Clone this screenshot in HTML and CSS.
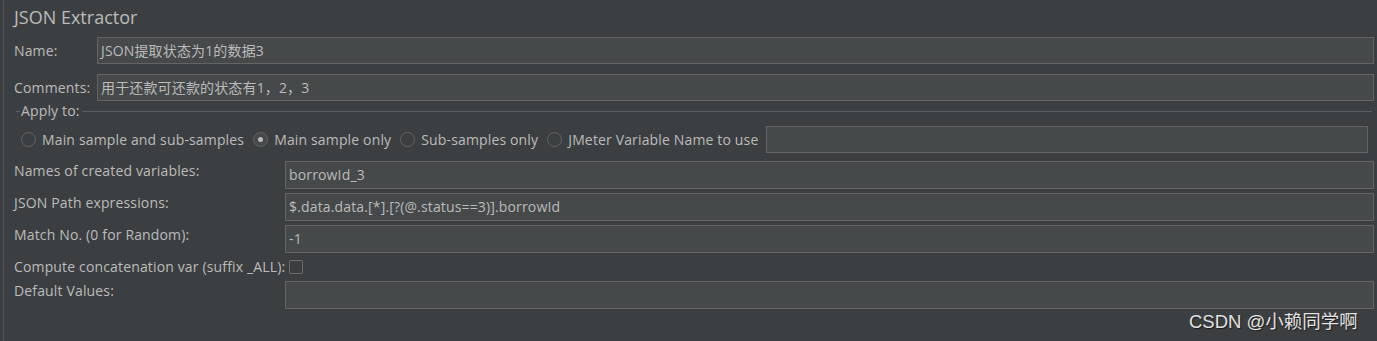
FILE: index.html
```html
<!DOCTYPE html>
<html lang="en">
<head>
    <meta charset="UTF-8">
    <title>JSON Extractor</title>
    <link rel="stylesheet" href="styles.css">
</head>
<body>
    <div class="panel">
        <h1 class="title">JSON Extractor</h1>

        <div class="row">
            <label class="row-label">Name:</label>
            <div class="field">JSON提取状态为1的数据3</div>
        </div>
        <div class="row">
            <label class="row-label">Comments:</label>
            <div class="field">用于还款可还款的状态有1，2，3</div>
        </div>

        <!-- Apply to group -->
        <div class="group">
            <div class="group-head"><span class="legend">Apply to:</span></div>
            <div class="radios">
                <span class="radio"></span><span class="radio-text">Main sample and sub-samples</span>
                <span class="radio checked"></span><span class="radio-text">Main sample only</span>
                <span class="radio"></span><span class="radio-text">Sub-samples only</span>
                <span class="radio"></span><span class="radio-text">JMeter Variable Name to use</span>
                <div class="field var-field"></div>
            </div>
        </div>

        <div class="form">
            <label class="form-label">Names of created variables:</label>
            <div class="field">borrowId_3</div>
            <label class="form-label">JSON Path expressions:</label>
            <div class="field">$.data.data.[*].[?(@.status==3)].borrowId</div>
            <label class="form-label">Match No. (0 for Random):</label>
            <div class="field">-1</div>
            <label class="form-label check-label">Compute concatenation var (suffix _ALL):</label>
            <div class="check-cell"><span class="checkbox"></span></div>
            <label class="form-label">Default Values:</label>
            <div class="field"></div>
        </div>
    </div>

    <div class="watermark">CSDN @小赖同学啊</div>
</body>
</html>
```

FILE: styles.css
```css
body {
    margin: 0;
    background: #3c3f41;
    color: #bbbbbb;
    font-family: "Open Sans", "Noto Sans CJK SC", sans-serif;
    font-size: 14px;
    letter-spacing: 0.15px;
    height: 341px;
    overflow: hidden;
}
.panel {
    margin-left: 3px;
    border-left: 1px solid #515456;
    padding: 0 3px 0 10px;
    height: 341px;
    box-sizing: border-box;
}
.title {
    margin: 0;
    font-size: 18px;
    font-weight: normal;
    letter-spacing: 0;
    line-height: 22px;
    padding-top: 6px;
    height: 31px;
    color: #bbbbbb;
}
.row {
    display: flex;
    align-items: center;
    margin-bottom: 10px;
}
.row-label {
    width: 83px;
    flex: none;
}
.field {
    flex: 1;
    height: 27px;
    box-sizing: border-box;
    background: #45494a;
    border: 1px solid #646464;
    padding-left: 3px;
    line-height: 25px;
    white-space: nowrap;
    color: #bbbbbb;
}
.group {
    padding: 0 2px 0 2px;
}
.group-head {
    height: 1px;
    background: #5a5d5f;
    position: relative;
    margin-top: 7px;
}
.legend {
    position: absolute;
    left: 4px;
    top: -9px;
    background: #3c3f41;
    padding: 0 2px 0 1px;
    line-height: 18px;
}
.radios {
    display: flex;
    align-items: center;
    padding: 14px 4px 0 5px;
    height: 27px;
}
.radio {
    width: 13px;
    height: 13px;
    border: 1px solid #646464;
    border-radius: 50%;
    background: #3c3f41;
    flex: none;
    margin-right: 6px;
    position: relative;
}
.radio.checked {
    background: #45494a;
}
.radio.checked::after {
    content: "";
    position: absolute;
    width: 5px;
    height: 5px;
    border-radius: 50%;
    background: #bbbbbb;
    left: 4px;
    top: 4px;
}
.radio-text {
    margin-right: 9px;
    white-space: nowrap;
}
.var-field {
    margin-left: -1px;
}
.form {
    display: grid;
    grid-template-columns: 271px 1fr;
    row-gap: 4px;
    margin-top: 8px;
}
.form .field {
    height: 28px;
    line-height: 26px;
}
.form-label {
    line-height: 18px;
    padding-top: 1px;
    white-space: nowrap;
}
.check-label {
    padding-top: 0;
    align-self: center;
}
.check-cell {
    display: flex;
    align-items: center;
    height: 20px;
    padding-left: 4px;
}
.checkbox {
    width: 12px;
    height: 12px;
    border: 1px solid #6b6b6b;
    border-radius: 2px;
    background: #3c3f41;
}
.watermark {
    position: absolute;
    left: 1189px;
    top: 310px;
    font-family: "Liberation Sans", "Noto Sans CJK SC", sans-serif;
    font-size: 18.5px;
    letter-spacing: 0;
    line-height: 24px;
    color: #e2e2e2;
    text-shadow: 1px 1px 1px #1a1a1a;
}
```
